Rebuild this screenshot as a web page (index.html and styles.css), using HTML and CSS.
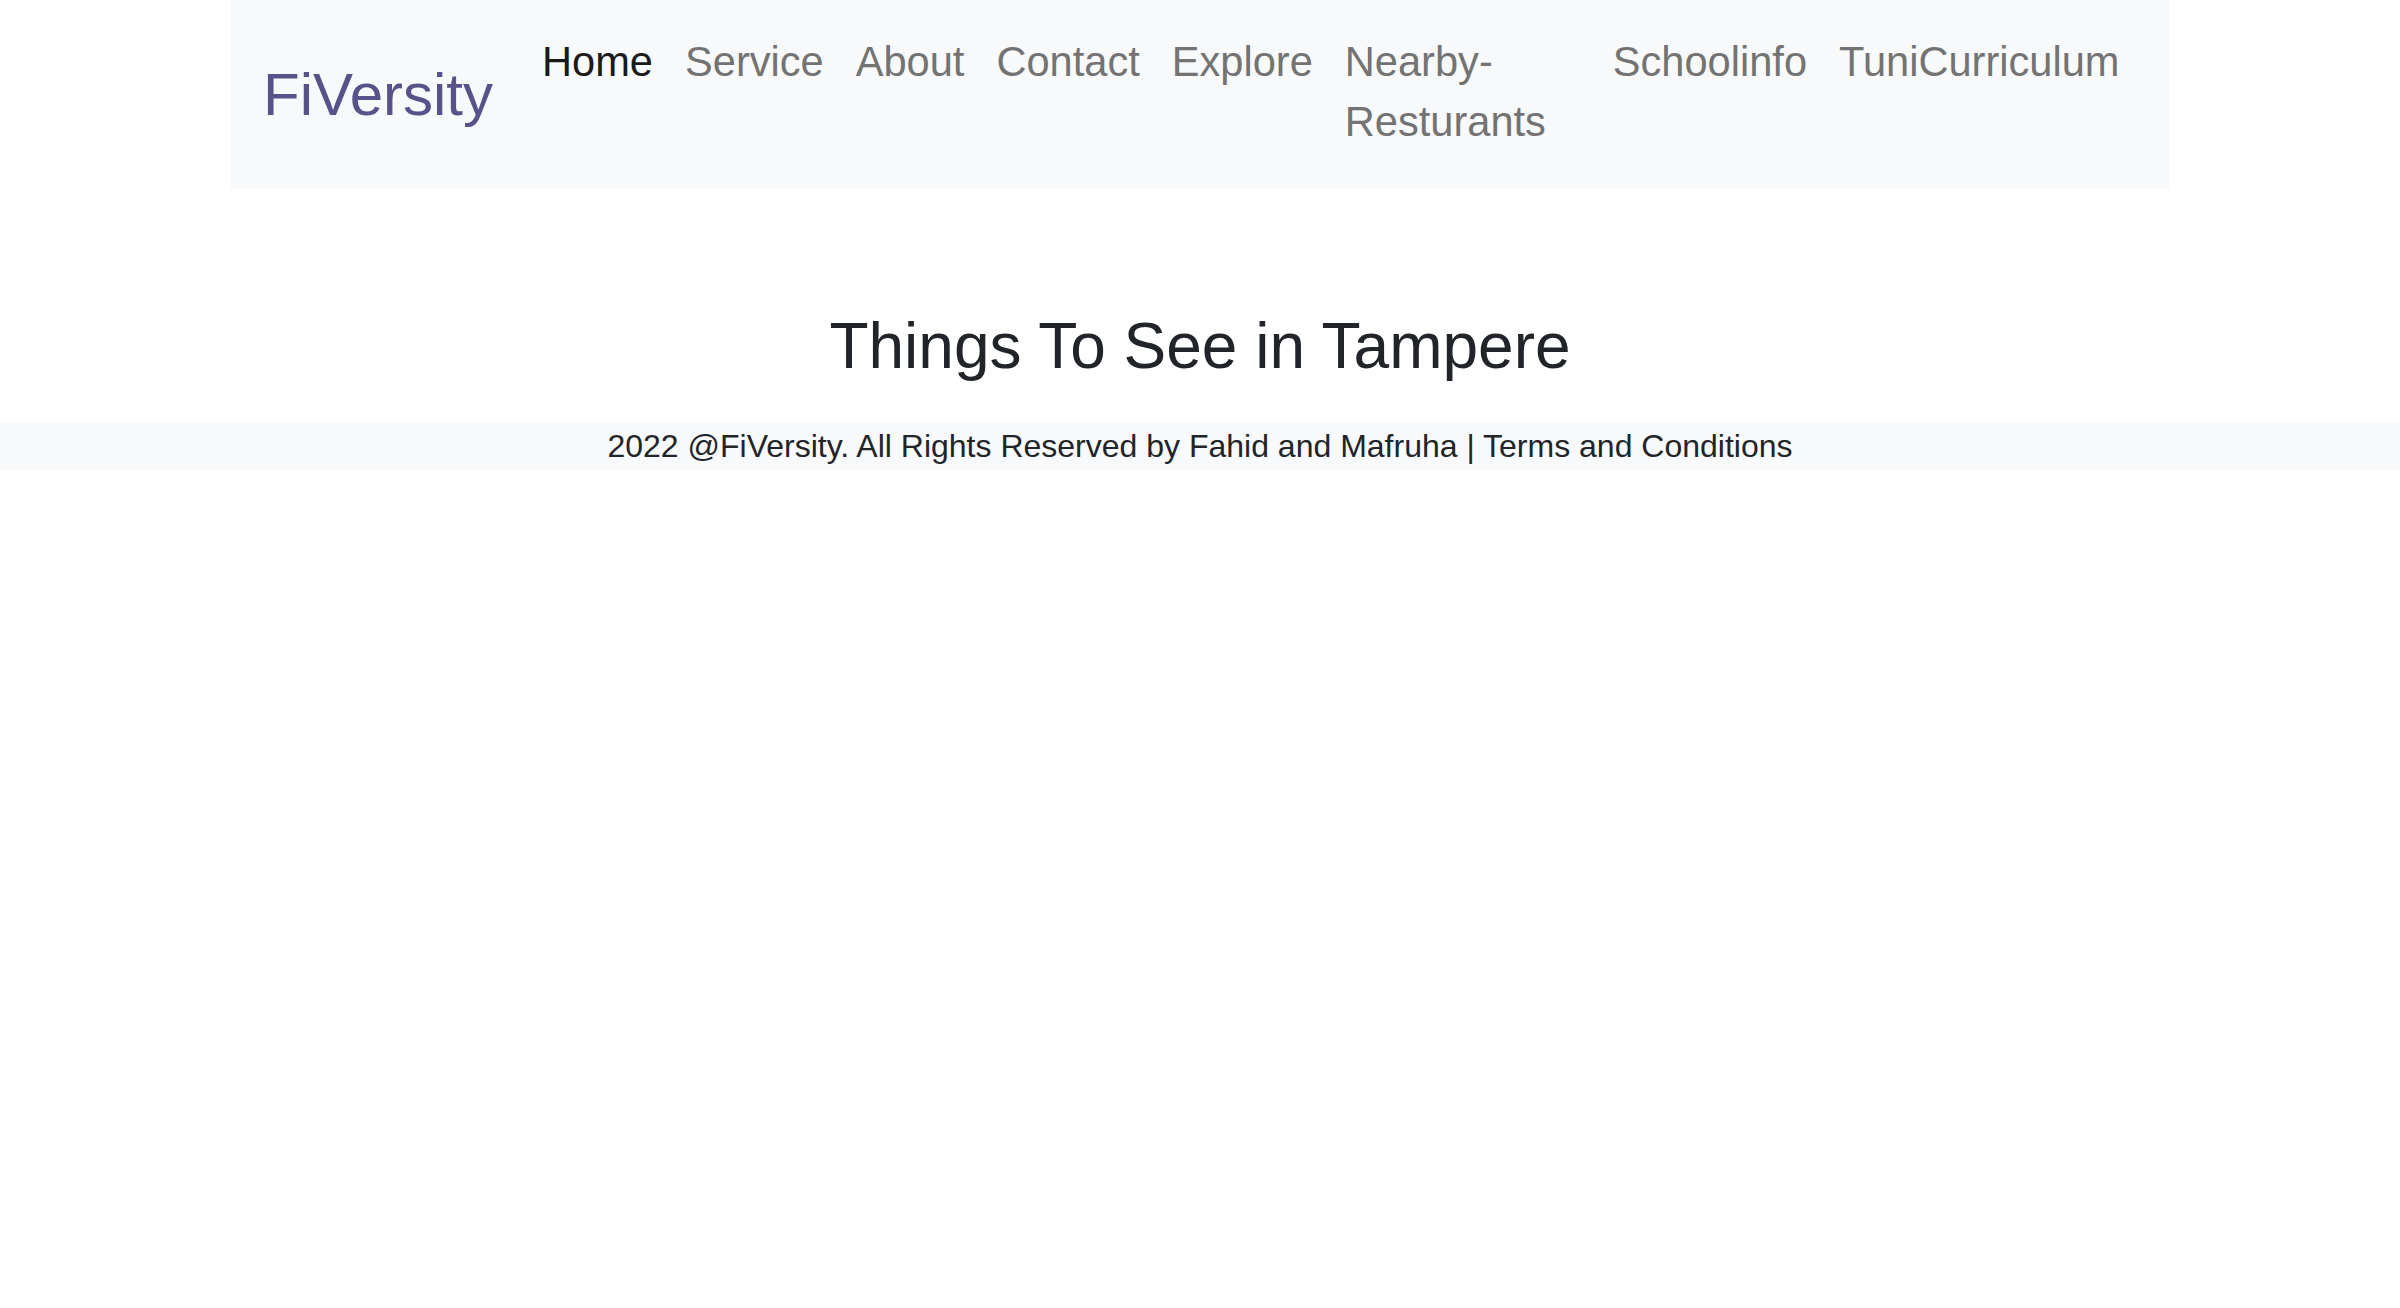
FILE: index.html
```html
<!DOCTYPE html>
<html lang="en">
<head>
<meta charset="utf-8">
<title>FiVersity - Explore</title>
<link rel="stylesheet" href="styles.css">
</head>
<body>
<div class="container">
  <nav class="navbar">
    <a class="brand" href="#">FiVersity</a>
    <ul class="nav">
      <li><a class="nav-link active" href="#">Home</a></li>
      <li><a class="nav-link" href="#">Service</a></li>
      <li><a class="nav-link" href="#">About</a></li>
      <li><a class="nav-link" href="#">Contact</a></li>
      <li><a class="nav-link" href="#">Explore</a></li>
      <li class="shrink"><a class="nav-link" href="#">Nearby-Resturants</a></li>
      <li><a class="nav-link" href="#">Schoolinfo</a></li>
      <li><a class="nav-link" href="#">TuniCurriculum</a></li>
    </ul>
  </nav>
</div>
<main>
  <h1 class="title">Things To See in Tampere</h1>
</main>
<footer class="footer">
  <p>2022 @FiVersity. All Rights Reserved by Fahid and Mafruha | Terms and Conditions</p>
</footer>
</body>
</html>
```
FILE: styles.css
```css
html, body {
  margin: 0;
  padding: 0;
  background: #ffffff;
  font-family: "Liberation Sans", Arial, Helvetica, sans-serif;
  color: #212529;
}

.container {
  width: 1938px;
  margin: 0 auto;
  box-sizing: border-box;
}

.navbar {
  display: flex;
  align-items: center;
  background: #f8f9fa;
  padding: 16px 24px 16px 32px;
  min-height: 189px;
  box-sizing: border-box;
}

.brand {
  font-size: 60px;
  line-height: 90px;
  color: #56538a;
  text-decoration: none;
  margin-right: 33px;
  white-space: nowrap;
  flex: none;
}

.nav {
  display: flex;
  align-items: flex-start;
  list-style: none;
  margin: 0;
  padding: 0;
  flex: 1 1 auto;
  min-width: 0;
  align-self: flex-start;
}

.nav li {
  flex: none;
}

.nav li.shrink {
  flex: 0 1 268px;
}

.nav-link {
  display: block;
  padding: 16px;
  font-size: 41.6px;
  line-height: 60px;
  color: #737373;
  text-decoration: none;
}

.nav-link.active {
  color: #1a1a1a;
}

main {
  text-align: center;
}

.title {
  margin: 119px 0 37px;
  font-size: 64px;
  font-weight: 400;
  line-height: 77px;
  color: #212529;
}

.footer {
  background: #f8f9fa;
  text-align: center;
}

.footer p {
  margin: 0;
  font-size: 32px;
  line-height: 48px;
  color: #212529;
}
```
